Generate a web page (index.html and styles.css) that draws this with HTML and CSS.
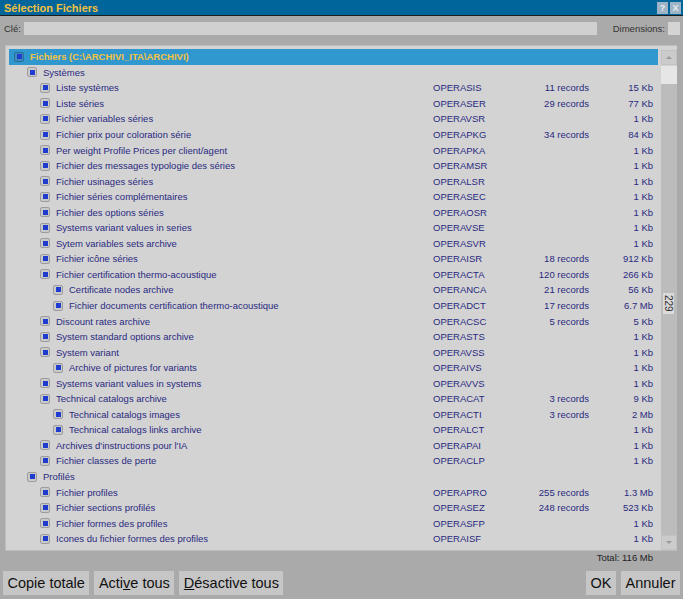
FILE: index.html
```html
<!DOCTYPE html>
<html lang="fr">
<head>
    <meta charset="UTF-8">
    <title>Sélection Fichiers</title>
    <link rel="stylesheet" href="styles.css">
</head>
<body>
    <div class="titlebar">
        <span class="title">Sélection Fichiers</span>
        <div class="title-buttons">
            <span class="tbtn">?</span>
            <span class="tbtn">X</span>
        </div>
    </div>

    <div class="keyrow">
        <label class="lbl">Clé:</label>
        <div class="field key"></div>
        <label class="lbl dim">Dimensions:</label>
        <div class="field small"></div>
    </div>

    <div class="panel">
        <div class="rows">
            <div class="row lvl0 selected"><span class="name"><i class="chk"></i>Fichiers (C:\ARCHIVI_ITA\ARCHIVI)</span><span></span><span></span><span></span></div>
            <div class="row lvl1"><span class="name"><i class="chk"></i>Systèmes</span><span></span><span></span><span></span></div>
            <div class="row lvl2"><span class="name"><i class="chk"></i>Liste systèmes</span><span class="code">OPERASIS</span><span class="rec">11 records</span><span class="size">15 Kb</span></div>
            <div class="row lvl2"><span class="name"><i class="chk"></i>Liste séries</span><span class="code">OPERASER</span><span class="rec">29 records</span><span class="size">77 Kb</span></div>
            <div class="row lvl2"><span class="name"><i class="chk"></i>Fichier variables séries</span><span class="code">OPERAVSR</span><span class="rec"></span><span class="size">1 Kb</span></div>
            <div class="row lvl2"><span class="name"><i class="chk"></i>Fichier prix pour coloration série</span><span class="code">OPERAPKG</span><span class="rec">34 records</span><span class="size">84 Kb</span></div>
            <div class="row lvl2"><span class="name"><i class="chk"></i>Per weight Profile Prices per client/agent</span><span class="code">OPERAPKA</span><span class="rec"></span><span class="size">1 Kb</span></div>
            <div class="row lvl2"><span class="name"><i class="chk"></i>Fichier des messages typologie des séries</span><span class="code">OPERAMSR</span><span class="rec"></span><span class="size">1 Kb</span></div>
            <div class="row lvl2"><span class="name"><i class="chk"></i>Fichier usinages séries</span><span class="code">OPERALSR</span><span class="rec"></span><span class="size">1 Kb</span></div>
            <div class="row lvl2"><span class="name"><i class="chk"></i>Fichier séries complémentaires</span><span class="code">OPERASEC</span><span class="rec"></span><span class="size">1 Kb</span></div>
            <div class="row lvl2"><span class="name"><i class="chk"></i>Fichier des options séries</span><span class="code">OPERAOSR</span><span class="rec"></span><span class="size">1 Kb</span></div>
            <div class="row lvl2"><span class="name"><i class="chk"></i>Systems variant values in series</span><span class="code">OPERAVSE</span><span class="rec"></span><span class="size">1 Kb</span></div>
            <div class="row lvl2"><span class="name"><i class="chk"></i>Sytem variables sets archive</span><span class="code">OPERASVR</span><span class="rec"></span><span class="size">1 Kb</span></div>
            <div class="row lvl2"><span class="name"><i class="chk"></i>Fichier icône séries</span><span class="code">OPERAISR</span><span class="rec">18 records</span><span class="size">912 Kb</span></div>
            <div class="row lvl2"><span class="name"><i class="chk"></i>Fichier certification thermo-acoustique</span><span class="code">OPERACTA</span><span class="rec">120 records</span><span class="size">266 Kb</span></div>
            <div class="row lvl3"><span class="name"><i class="chk"></i>Certificate nodes archive</span><span class="code">OPERANCA</span><span class="rec">21 records</span><span class="size">56 Kb</span></div>
            <div class="row lvl3"><span class="name"><i class="chk"></i>Fichier documents certification thermo-acoustique</span><span class="code">OPERADCT</span><span class="rec">17 records</span><span class="size">6.7 Mb</span></div>
            <div class="row lvl2"><span class="name"><i class="chk"></i>Discount rates archive</span><span class="code">OPERACSC</span><span class="rec">5 records</span><span class="size">5 Kb</span></div>
            <div class="row lvl2"><span class="name"><i class="chk"></i>System standard options archive</span><span class="code">OPERASTS</span><span class="rec"></span><span class="size">1 Kb</span></div>
            <div class="row lvl2"><span class="name"><i class="chk"></i>System variant</span><span class="code">OPERAVSS</span><span class="rec"></span><span class="size">1 Kb</span></div>
            <div class="row lvl3"><span class="name"><i class="chk"></i>Archive of pictures for variants</span><span class="code">OPERAIVS</span><span class="rec"></span><span class="size">1 Kb</span></div>
            <div class="row lvl2"><span class="name"><i class="chk"></i>Systems variant values in systems</span><span class="code">OPERAVVS</span><span class="rec"></span><span class="size">1 Kb</span></div>
            <div class="row lvl2"><span class="name"><i class="chk"></i>Technical catalogs archive</span><span class="code">OPERACAT</span><span class="rec">3 records</span><span class="size">9 Kb</span></div>
            <div class="row lvl3"><span class="name"><i class="chk"></i>Technical catalogs images</span><span class="code">OPERACTI</span><span class="rec">3 records</span><span class="size">2 Mb</span></div>
            <div class="row lvl3"><span class="name"><i class="chk"></i>Technical catalogs links archive</span><span class="code">OPERALCT</span><span class="rec"></span><span class="size">1 Kb</span></div>
            <div class="row lvl2"><span class="name"><i class="chk"></i>Archives d'instructions pour l'IA</span><span class="code">OPERAPAI</span><span class="rec"></span><span class="size">1 Kb</span></div>
            <div class="row lvl2"><span class="name"><i class="chk"></i>Fichier classes de perte</span><span class="code">OPERACLP</span><span class="rec"></span><span class="size">1 Kb</span></div>
            <div class="row lvl1"><span class="name"><i class="chk"></i>Profilés</span><span></span><span></span><span></span></div>
            <div class="row lvl2"><span class="name"><i class="chk"></i>Fichier profiles</span><span class="code">OPERAPRO</span><span class="rec">255 records</span><span class="size">1.3 Mb</span></div>
            <div class="row lvl2"><span class="name"><i class="chk"></i>Fichier sections profilés</span><span class="code">OPERASEZ</span><span class="rec">248 records</span><span class="size">523 Kb</span></div>
            <div class="row lvl2"><span class="name"><i class="chk"></i>Fichier formes des profiles</span><span class="code">OPERASFP</span><span class="rec"></span><span class="size">1 Kb</span></div>
            <div class="row lvl2"><span class="name"><i class="chk"></i>Icones du fichier formes des profiles</span><span class="code">OPERAISF</span><span class="rec"></span><span class="size">1 Kb</span></div>
        </div>

        <div class="scrollbar">
            <div class="arrow up"></div>
            <div class="thumb"></div>
            <div class="track"></div>
            <div class="arrow down"></div>
            <span class="count">229</span>
        </div>
    </div>

    <div class="total">Total: 116 Mb</div>

    <div class="buttons">
        <button class="btn">Copie totale</button>
        <button class="btn">Acti<u>v</u>e tous</button>
        <button class="btn"><u>D</u>ésactive tous</button>
        <span class="spacer"></span>
        <button class="btn">OK</button>
        <button class="btn">Annuler</button>
    </div>
</body>
</html>
```

FILE: styles.css
```css
body {
    margin: 0;
    width: 683px;
    height: 599px;
    overflow: hidden;
    background: #aaaaaa;
    font-family: 'Liberation Sans', Arial, sans-serif;
    font-size: 9.5px;
    color: #29297f;
}

.titlebar {
    height: 15px;
    background: #00659a;
    border-bottom: 1px solid #1c1c1c;
    display: flex;
    align-items: center;
    justify-content: space-between;
    padding: 0 2px 0 4px;
}

.title {
    font-size: 11px;
    font-weight: bold;
    color: #f2c040;
}

.title-buttons {
    display: flex;
    gap: 2px;
}

.tbtn {
    width: 11px;
    height: 12px;
    background: #9db4c6;
    color: #e8eef2;
    font-size: 9px;
    font-weight: bold;
    text-align: center;
    line-height: 12px;
}

.keyrow {
    display: flex;
    align-items: center;
    height: 13px;
    margin-top: 6px;
    padding: 0 3px 0 4px;
}

.lbl {
    color: #333;
    margin-right: 3px;
}

.lbl.dim {
    margin-left: 16px;
}

.field {
    height: 13px;
    background: #d0d0d0;
}

.field.key {
    flex: 1;
}

.field.small {
    width: 12px;
    background: #d4d4d4;
}

.panel {
    margin: 10px 6px 0 5px;
    height: 501px;
    background: #d3d3d3;
    border: 1px solid #bdbdbd;
    border-right: none;
    padding: 3px 0 0 3px;
    display: flex;
    gap: 3px;
}

.rows {
    width: 649px;
}

.row {
    display: grid;
    grid-template-columns: 424px 97px 59px 64px;
    height: 15.55px;
    align-items: center;
    white-space: nowrap;
}

.row .name {
    display: flex;
    align-items: center;
    gap: 6px;
}

.lvl0 .name { padding-left: 5px; }
.lvl1 .name { padding-left: 18px; }
.lvl2 .name { padding-left: 31px; }
.lvl3 .name { padding-left: 44px; }

.row.selected {
    background: #3097cf;
    color: #f5c342;
    font-weight: bold;
}

.chk {
    width: 8px;
    height: 8px;
    border: 1px solid #9d9d9d;
    border-radius: 2px;
    background: #c9c9c9;
    display: flex;
    align-items: center;
    justify-content: center;
    flex: none;
}

.chk::after {
    content: '';
    width: 5px;
    height: 5px;
    background: #1f3ccf;
}

.selected .chk {
    border-color: #2a6f97;
    background: #3a8cbc;
}

.rec, .size {
    text-align: right;
}

.scrollbar {
    width: 16px;
    margin-top: 1px;
    display: flex;
    flex-direction: column;
    position: relative;
}

.arrow {
    height: 15px;
    background: #cbcbcb;
    border: 1px solid #c2c2c2;
    box-sizing: border-box;
    display: flex;
    align-items: center;
    justify-content: center;
}

.arrow::after {
    content: '';
    border-left: 3px solid transparent;
    border-right: 3px solid transparent;
}

.arrow.up::after {
    border-bottom: 3px solid #9a9a9a;
}

.arrow.down::after {
    border-top: 3px solid #9a9a9a;
}

.thumb {
    height: 18px;
    margin-top: 1px;
    background: #e6e6e6;
}

.track {
    flex: 1;
    background: #bcbcbc;
}

.count {
    position: absolute;
    top: 243px;
    left: 2px;
    width: 11px;
    padding: 2px 0;
    background: #dadada;
    color: #333;
    font-size: 10px;
    writing-mode: vertical-rl;
    text-align: center;
    line-height: 11px;
}

.total {
    height: 20px;
    line-height: 14px;
    text-align: right;
    padding-right: 30px;
    color: #222;
}

.buttons {
    display: flex;
    gap: 5px;
    padding: 0 3px;
}

.btn {
    height: 24px;
    padding: 0 4.5px;
    border: none;
    background: #c6c6c6;
    font-family: 'Liberation Sans', Arial, sans-serif;
    font-size: 14.5px;
    color: #111;
}

.spacer {
    flex: 1;
}
```
